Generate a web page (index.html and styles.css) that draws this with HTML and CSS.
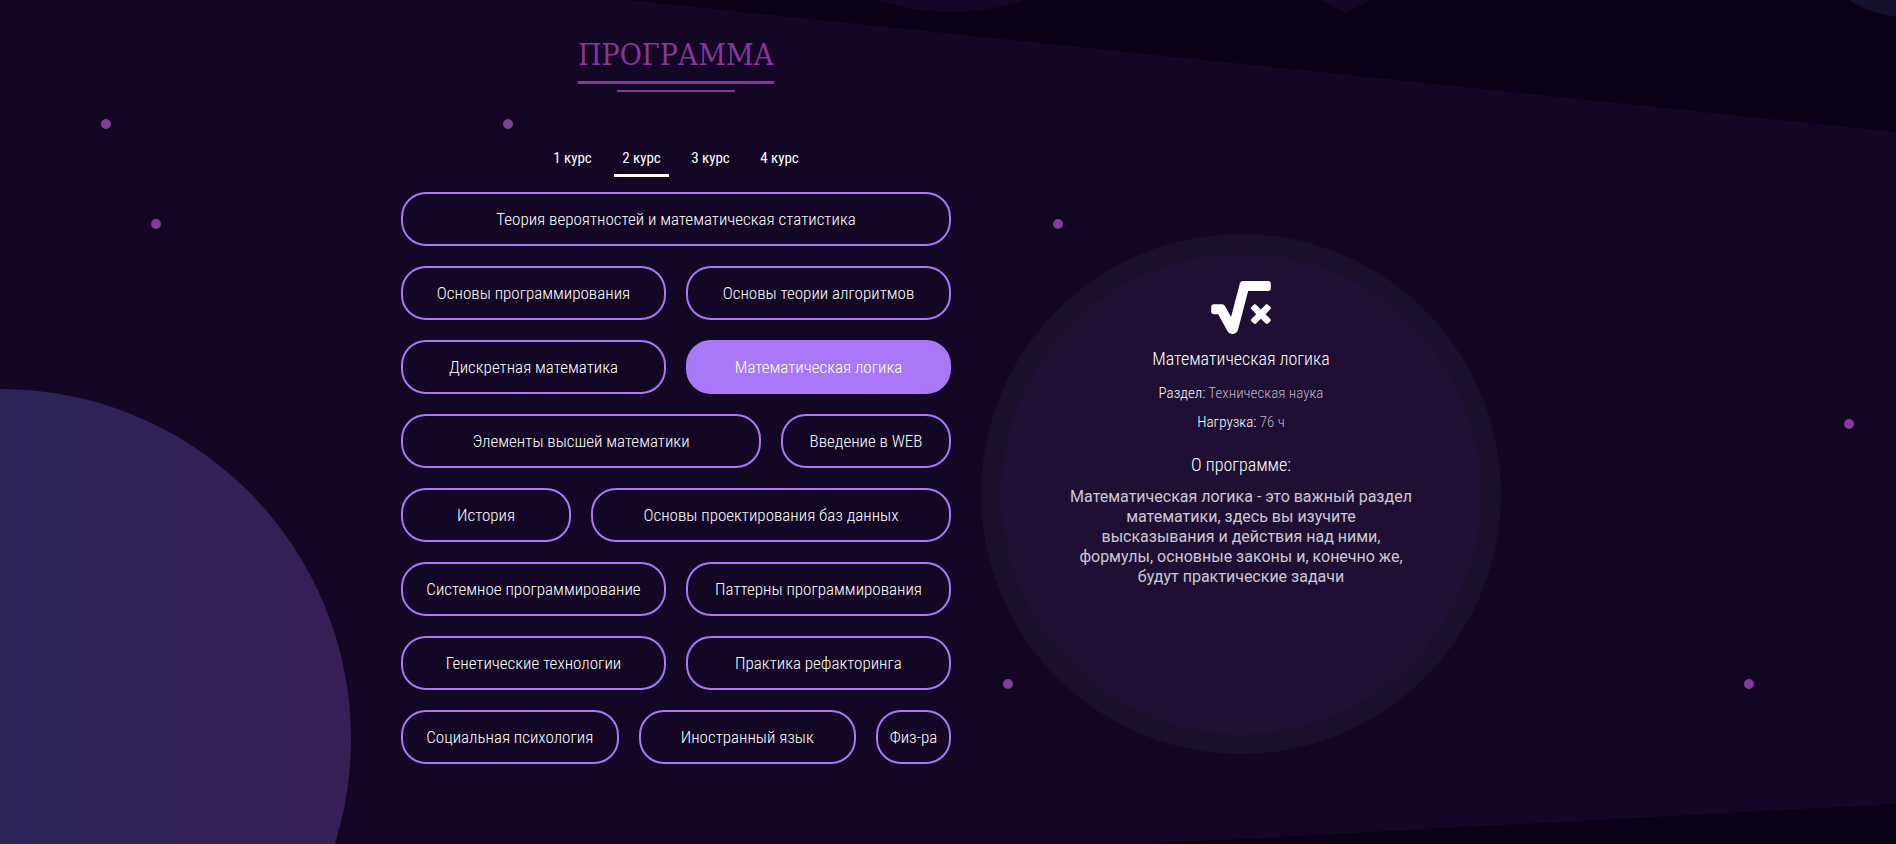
FILE: index.html
```html
<!DOCTYPE html>
<html lang="ru">
<head>
<meta charset="utf-8">
<title>Программа</title>
<meta name="viewport" content="width=device-width, initial-scale=1">
<link rel="stylesheet" href="styles.css">
</head>
<body>
<section class="program">
  <svg class="backdrop" viewBox="0 0 1896 844" preserveAspectRatio="xMidYMin slice" aria-hidden="true">
    <defs>
      <linearGradient id="planet" x1="0" x2="1" y1="0" y2="0">
        <stop offset="0" stop-color="#20295a"/>
        <stop offset="1" stop-color="#361f55"/>
      </linearGradient>
    </defs>
    <path class="shade" d="M628 0H1896V132Z"/>
    <path class="shade" d="M1150 844L1896 804V844Z"/>
    <circle class="shape" cx="951" cy="-222" r="234"/>
    <path class="shape" d="M1322 0H1370L1346 13Z"/>
    <circle class="moon" cx="1905" cy="-83" r="100"/>
    <circle fill="url(#planet)" cx="1" cy="739" r="350"/>
    <g class="stars">
      <circle cx="106" cy="124" r="5"/>
      <circle cx="156" cy="224" r="5"/>
      <circle cx="508" cy="124" r="5"/>
      <circle cx="1058" cy="224" r="5"/>
      <circle cx="1849" cy="424" r="5"/>
      <circle cx="1749" cy="684" r="5"/>
      <circle cx="1008" cy="684" r="5"/>
    </g>
  </svg>

  <div class="container">
    <div class="plan">
      <h2 class="title">ПРОГРАММА</h2>
      <nav class="tabs" aria-label="Курсы">
        <button class="tab" type="button">1 курс</button>
        <button class="tab tab-active" type="button" aria-current="true">2 курс</button>
        <button class="tab" type="button">3 курс</button>
        <button class="tab" type="button">4 курс</button>
      </nav>
      <div class="subjects">
        <button class="subject span-12" type="button">Теория вероятностей и математическая статистика</button>
        <button class="subject span-6" type="button">Основы программирования</button>
        <button class="subject span-6" type="button">Основы теории алгоритмов</button>
        <button class="subject span-6" type="button">Дискретная математика</button>
        <button class="subject span-6 subject-active" type="button" aria-pressed="true">Математическая логика</button>
        <button class="subject span-8" type="button">Элементы высшей математики</button>
        <button class="subject span-4" type="button">Введение в WEB</button>
        <button class="subject span-4" type="button">История</button>
        <button class="subject span-8" type="button">Основы проектирования баз данных</button>
        <button class="subject span-6" type="button">Системное программирование</button>
        <button class="subject span-6" type="button">Паттерны программирования</button>
        <button class="subject span-6" type="button">Генетические технологии</button>
        <button class="subject span-6" type="button">Практика рефакторинга</button>
        <button class="subject span-5" type="button">Социальная психология</button>
        <button class="subject span-5" type="button">Иностранный язык</button>
        <button class="subject span-2" type="button">Физ-ра</button>
      </div>
    </div>

    <article class="details">
      <svg class="icon" viewBox="0 0 576 512" aria-hidden="true"><path d="M571.31 251.31l-22.62-22.62c-6.25-6.25-16.38-6.25-22.63 0L480 274.75l-46.06-46.06c-6.25-6.25-16.38-6.25-22.63 0l-22.62 22.62c-6.25 6.25-6.25 16.38 0 22.63L434.75 320l-46.06 46.06c-6.25 6.25-6.25 16.38 0 22.63l22.62 22.62c6.25 6.25 16.38 6.25 22.63 0L480 365.25l46.06 46.06c6.25 6.25 16.38 6.25 22.63 0l22.62-22.62c6.25-6.25 6.25-16.38 0-22.63L525.25 320l46.06-46.06c6.25-6.25 6.25-16.38 0-22.63zM552 0H307.65c-14.54 0-27.26 9.8-30.95 23.87l-84.79 322.8-58.41-106.1A32.008 32.008 0 0 0 105.47 224H24c-13.25 0-24 10.74-24 24v48c0 13.25 10.75 24 24 24h43.62l88.88 163.73C168.99 503.5 186.3 512 204.94 512c17.27 0 44.44-9 54.28-41.48L357.03 96H552c13.25 0 24-10.75 24-24V24c0-13.26-10.75-24-24-24z"/></svg>
      <h3 class="name">Математическая логика</h3>
      <p class="fact">Раздел: <span class="value">Техническая наука</span></p>
      <p class="fact">Нагрузка: <span class="value">76 ч</span></p>
      <h3 class="about">О программе:</h3>
      <p class="text">Математическая логика - это важный раздел математики, здесь вы изучите<br>высказывания и действия над ними,<br>формулы, основные законы и, конечно же,<br>будут практические задачи</p>
    </article>
  </div>
</section>
</body>
</html>
```
FILE: styles.css
```css
* {
  box-sizing: border-box;
}

body {
  margin: 0;
  background: #130725;
  color: #fff;
  font-family: "Roboto Condensed", "Liberation Sans", sans-serif;
  font-weight: 300;
}

h2, h3, p {
  margin: 0;
  font-weight: inherit;
}

button {
  padding: 0;
  border: 0;
  background: none;
  color: inherit;
  font: inherit;
  cursor: pointer;
}

.program {
  position: relative;
  min-height: 100vh;
  overflow: hidden;
}

.backdrop {
  position: absolute;
  inset: 0;
  width: 100%;
  height: 100%;
}

.shade { fill: #0a0116; }
.shape { fill: #130725; }
.moon { fill: #16102f; }
.stars { fill: #823c9c; }

.container {
  position: relative;
  display: grid;
  grid-template-columns: 55fr 52fr;
  column-gap: 30px;
  max-width: 1106px;
  margin: 0 auto;
  padding: 37px 0 80px 6px;
}

.plan {
  display: flex;
  flex-direction: column;
  align-items: center;
}

.title {
  display: flex;
  flex-direction: column;
  align-items: center;
  color: #87379b;
  font-family: "DejaVu Serif Condensed", "DejaVu Serif", serif;
  font-size: 30px;
  font-weight: 400;
  line-height: 36px;
}

.title::before {
  content: "";
  order: 1;
  width: 100%;
  height: 3px;
  margin: 8px 0 6px;
  background: #87379b;
}

.title::after {
  content: "";
  order: 2;
  width: 60%;
  height: 2px;
  background: #87379b;
}

.tabs {
  display: flex;
  gap: 14px;
  margin: 50px 0 15px;
}

.tab {
  width: 55px;
  border-bottom: 3px solid transparent;
  font-size: 15px;
  font-weight: 400;
  line-height: 32px;
}

.tab-active {
  border-color: #fff;
}

.subjects {
  display: grid;
  grid-template-columns: repeat(12, minmax(0, 1fr));
  gap: 20px;
  width: 100%;
}

.subject {
  height: 54px;
  border: 2px solid #a878f8;
  border-radius: 25px;
  font-size: 17px;
}

.subject-active {
  background: #a878f8;
}

.span-2 { grid-column: span 2; }
.span-4 { grid-column: span 4; }
.span-5 { grid-column: span 5; }
.span-6 { grid-column: span 6; }
.span-8 { grid-column: span 8; }
.span-12 { grid-column: span 12; }

.details {
  display: flex;
  flex-direction: column;
  align-items: center;
  align-self: start;
  aspect-ratio: 1;
  margin-top: 197px;
  padding: 27px 64px;
  border: 20px solid #1b0f2e;
  border-radius: 50%;
  background: #1f0f35;
  text-align: center;
}

.icon {
  width: 60px;
  height: 53px;
  fill: #fff;
}

.name {
  margin: 9px 0 4px;
  font-size: 18px;
  line-height: 32px;
}

.fact {
  font-size: 15px;
  line-height: 29px;
}

.value {
  color: #bbb6c6;
}

.about {
  margin: 12px 0 6px;
  font-size: 18px;
  line-height: 32px;
}

.text {
  color: #ccc8d2;
  font-family: Roboto, "Liberation Sans", sans-serif;
  font-size: 16px;
  font-weight: 400;
  line-height: 20px;
}
```
